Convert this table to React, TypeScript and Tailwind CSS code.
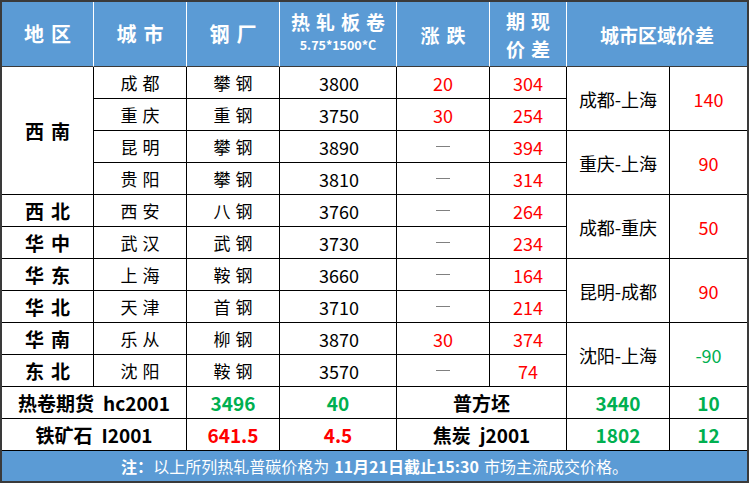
import React from "react"

const RED = "text-[#ff0000]"
const GREEN = "text-[#00b050]"

type Row = {
  region?: string
  span?: number
  city: string
  mill: string
  price: string
  change: string
  spread: string
  pair?: string
  diff?: string
  diffGreen?: boolean
}

const rows: Row[] = [
  { region: "西南", span: 4, city: "成都", mill: "攀钢", price: "3800", change: "20", spread: "304", pair: "成都-上海", diff: "140" },
  { city: "重庆", mill: "重钢", price: "3750", change: "30", spread: "254" },
  { city: "昆明", mill: "攀钢", price: "3890", change: "", spread: "394", pair: "重庆-上海", diff: "90" },
  { city: "贵阳", mill: "攀钢", price: "3810", change: "", spread: "314" },
  { region: "西北", city: "西安", mill: "八钢", price: "3760", change: "", spread: "264", pair: "成都-重庆", diff: "50" },
  { region: "华中", city: "武汉", mill: "武钢", price: "3730", change: "", spread: "234" },
  { region: "华东", city: "上海", mill: "鞍钢", price: "3660", change: "", spread: "164", pair: "昆明-成都", diff: "90" },
  { region: "华北", city: "天津", mill: "首钢", price: "3710", change: "", spread: "214" },
  { region: "华南", city: "乐从", mill: "柳钢", price: "3870", change: "30", spread: "374", pair: "沈阳-上海", diff: "-90", diffGreen: true },
  { region: "东北", city: "沈阳", mill: "鞍钢", price: "3570", change: "", spread: "74" },
]

// header cell: white divider on the right, dark line below
function Head({ children, last, className = "" }: { children: React.ReactNode; last?: boolean; className?: string }) {
  return (
    <div
      className={
        "flex flex-col items-center justify-center border-b border-b-[#3a3a3a] font-bold text-white " +
        (last ? "" : "border-r border-r-white ") +
        className
      }
    >
      {children}
    </div>
  )
}

function Cell({ children, last, className = "" }: { children?: React.ReactNode; last?: boolean; className?: string }) {
  return (
    <div
      className={
        "flex items-center justify-center border-b border-black " +
        (last ? "" : "border-r ") +
        className
      }
    >
      {children}
    </div>
  )
}

export default function App() {
  return (
    <div className="w-[749px] h-[483px] border-2 border-[#3a3a3a] bg-white font-['Noto_Sans_CJK_SC',sans-serif] text-black leading-none">
      <div className="grid grid-cols-[92px_93px_93px_117px_93px_77px_103px_77px] grid-rows-[65px_repeat(12,32px)]">
        {/* header */}
        <Head className="bg-[#5b9bd5] text-[20px] tracking-[7px] pl-[7px]">地区</Head>
        <Head className="bg-[#5b9bd5] text-[20px] tracking-[7px] pl-[7px]">城市</Head>
        <Head className="bg-[#5b9bd5] text-[20px] tracking-[7px] pl-[7px]">钢厂</Head>
        <Head className="bg-[#5b9bd5]">
          <span className="text-[19px] tracking-[6px] pl-[6px] -mt-[4px]">热轧板卷</span>
          <span className="text-[12.5px] mt-[8px]">5.75*1500*C</span>
        </Head>
        <Head className="bg-[#5b9bd5] text-[19px] tracking-[7px] pl-[7px]">涨跌</Head>
        <Head className="bg-[#5b9bd5] text-[19px] tracking-[6px] pl-[6px] gap-[9px]">
          <span>期现</span>
          <span>价差</span>
        </Head>
        <Head last className="col-span-2 bg-[#5b9bd5] text-[19px]">城市区域价差</Head>

        {/* body */}
        {rows.map((r, i) => (
          <React.Fragment key={i}>
            {r.region && (
              <Cell
                className={
                  "col-start-1 text-[19px] font-bold tracking-[7px] pl-[7px] " +
                  (r.span === 4 ? "row-span-4" : "")
                }
              >
                {r.region}
              </Cell>
            )}
            <Cell className="col-start-2 text-[17px] tracking-[5px] pl-[5px]">{r.city}</Cell>
            <Cell className="text-[17px] tracking-[5px] pl-[5px]">{r.mill}</Cell>
            <Cell className="text-[18px] pl-[2px]">{r.price}</Cell>
            <Cell className={"text-[18px] " + RED}>
              {r.change || <span className="block w-[14px] h-px bg-[#808080]" />}
            </Cell>
            <Cell className={"text-[18px] " + RED}>{r.spread}</Cell>
            {r.pair && (
              <>
                <Cell className="row-span-2 text-[18px]">{r.pair}</Cell>
                <Cell last className={"row-span-2 text-[18px] " + (r.diffGreen ? GREEN : RED)}>
                  {r.diff}
                </Cell>
              </>
            )}
          </React.Fragment>
        ))}

        {/* futures rows */}
        <Cell className="col-span-2 text-[19px] font-bold">
          热卷期货<span className="ml-[9px]">hc2001</span>
        </Cell>
        <Cell className={"text-[19px] font-bold " + GREEN}>3496</Cell>
        <Cell className={"text-[19px] font-bold " + GREEN}>40</Cell>
        <Cell className="col-span-2 text-[19px] font-bold">普方坯</Cell>
        <Cell className={"text-[19px] font-bold " + GREEN}>3440</Cell>
        <Cell last className={"text-[19px] font-bold " + GREEN}>10</Cell>

        <Cell className="col-span-2 text-[19px] font-bold">
          铁矿石<span className="ml-[9px]">I2001</span>
        </Cell>
        <Cell className={"text-[19px] font-bold " + RED}>641.5</Cell>
        <Cell className={"text-[19px] font-bold " + RED}>4.5</Cell>
        <Cell className="col-span-2 text-[19px] font-bold">
          焦炭<span className="ml-[9px]">j2001</span>
        </Cell>
        <Cell className={"text-[19px] font-bold " + GREEN}>1802</Cell>
        <Cell last className={"text-[19px] font-bold " + GREEN}>12</Cell>
      </div>

      {/* note */}
      <div className="h-[30px] bg-[#5b9bd5] flex items-center justify-center text-white text-[16px]">
        <span className="font-bold">注：</span>
        <span>以上所列热轧普碳价格为</span>
        <span className="font-bold ml-[5px]">11月21日截止15:30</span>
        <span className="ml-[5px]">市场主流成交价格。</span>
      </div>
    </div>
  )
}
